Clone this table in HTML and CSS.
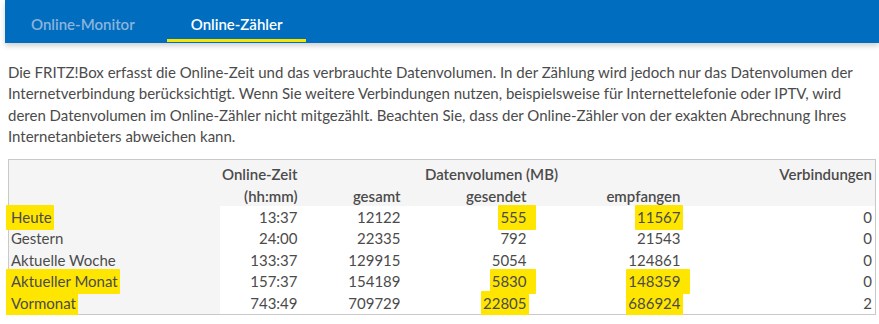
FILE: index.html
```html
<!DOCTYPE html>
<html lang="de">
<head>
<meta charset="utf-8">
<title>Online-Zähler</title>
<link rel="stylesheet" href="styles.css">
</head>
<body>
<header class="topbar">
  <nav class="tabs">
    <a class="tab">Online-Monitor</a>
    <a class="tab tab-active">Online-Zähler</a>
  </nav>
</header>
<main class="content">
  <p class="intro">Die FRITZ!Box erfasst die Online-Zeit und das verbrauchte Datenvolumen. In der Zählung wird jedoch nur das Datenvolumen der Internetverbindung berücksichtigt. Wenn Sie weitere Verbindungen nutzen, beispielsweise für Internettelefonie oder IPTV, wird deren Datenvolumen im Online-Zähler nicht mitgezählt. Beachten Sie, dass der Online-Zähler von der exakten Abrechnung Ihres Internetanbieters abweichen kann.</p>
  <table class="counter">
    <colgroup>
      <col class="c-name"><col class="c-time"><col class="c-total"><col class="c-sent"><col class="c-recv"><col class="c-conn">
    </colgroup>
    <thead>
      <tr>
        <th class="name"></th>
        <th>Online-Zeit</th>
        <th colspan="3" class="center">Datenvolumen (MB)</th>
        <th>Verbindungen</th>
      </tr>
      <tr>
        <th class="name"></th>
        <th>(hh:mm)</th>
        <th>gesamt</th>
        <th>gesendet</th>
        <th>empfangen</th>
        <th></th>
      </tr>
    </thead>
    <tbody>
      <tr><td class="name"><span class="hl hl-l">Heute</span></td><td>13:37</td><td>12122</td><td><span class="hl hl-r">555</span></td><td><span class="hl">11567</span></td><td>0</td></tr>
      <tr><td class="name">Gestern</td><td>24:00</td><td>22335</td><td>792</td><td>21543</td><td>0</td></tr>
      <tr><td class="name">Aktuelle Woche</td><td>133:37</td><td>129915</td><td>5054</td><td>124861</td><td>0</td></tr>
      <tr><td class="name"><span class="hl hl-l">Aktueller Monat</span></td><td>157:37</td><td>154189</td><td><span class="hl hl-r">5830</span></td><td><span class="hl hl-r">148359</span></td><td>0</td></tr>
      <tr><td class="name"><span class="hl hl-l">Vormonat</span></td><td>743:49</td><td>709729</td><td><span class="hl">22805</span></td><td><span class="hl">686924</span></td><td>2</td></tr>
    </tbody>
  </table>
</main>
</body>
</html>
```

FILE: styles.css
```css
html, body {
  margin: 0;
  padding: 0;
  background: #ffffff;
}
body {
  font-family: "Lato", "Open Sans", sans-serif;
  color: #4b4b4b;
  font-size: 15px;
}
.topbar {
  margin-left: 5px;
  height: 43px;
  background: #006dbf;
  box-shadow: 0 3px 5px rgba(0, 0, 0, 0.18);
}
.tabs {
  display: flex;
  gap: 8px;
  padding-left: 2px;
  height: 100%;
}
.tab {
  display: flex;
  align-items: center;
  padding: 8px 24px 0;
  font-weight: 600;
  font-size: 15px;
  color: #8bb4dc;
  border-bottom: 3px solid transparent;
  margin-bottom: 1px;
}
.tab-active {
  color: #ffffff;
  border-bottom-color: #f5e600;
}
.content {
  padding: 0 8px;
}
.intro {
  margin: 19px 0 0;
  line-height: 21.3px;
  width: 862px;
}
.counter {
  margin-top: 12px;
  width: 868px;
  border-collapse: collapse;
  border: 1px solid #c9c9c9;
  table-layout: fixed;
}
.c-name { width: 211px; }
.c-time { width: 81px; }
.c-total { width: 103px; }
.c-sent { width: 126px; }
.c-recv { width: 154px; }
.c-conn { width: 192px; }
.counter th, .counter td {
  text-align: right;
  padding: 0 3px 0 2px;
  height: 21.5px;
  line-height: 20px;
  white-space: nowrap;
}
.counter thead tr:first-child th { height: 23px; padding-top: 2px; }
.counter thead tr:last-child th { height: 21px; }
.counter th {
  background: #f5f5f5;
  font-weight: 600;
}
.counter th.center { text-align: center; }
.counter td.name, .counter th.name {
  text-align: left;
  background: #f5f5f5;
}
.hl {
  background: #ffe600;
  display: inline-block;
  padding: 2px 2px 3px 2px;
  margin: -2px -2px -3px -2px;
  border-radius: 1px;
}
.hl-l { padding-left: 5px; margin-left: -5px; }
.hl-r { padding-right: 9px; margin-right: -9px; }
```
